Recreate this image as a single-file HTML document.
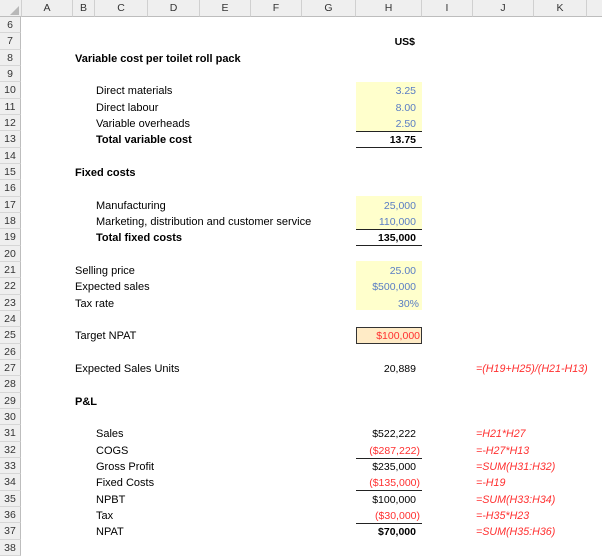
<!DOCTYPE html>
<html><head><meta charset="utf-8"><style>
*{margin:0;padding:0;box-sizing:border-box}
body{width:602px;height:549px;overflow:hidden;background:#fff;position:relative;font-family:"Liberation Sans",sans-serif;font-size:11px;color:#000}
.hdr{position:absolute;top:0;height:17px;background:#efefef;border-right:1px solid #d0d0d0;border-bottom:1px solid #bdbdbd;text-align:center;line-height:17px;color:#333;font-size:10.5px}
.rn{position:absolute;left:0;width:21px;height:16.33px;background:#efefef;border-bottom:1px solid #d6d6d6;border-right:1px solid #bdbdbd;text-align:center;line-height:16px;color:#333;font-size:10.5px}
.t{position:absolute;height:16.33px;line-height:18px;white-space:nowrap}
.r{text-align:right;font-size:10.5px;line-height:19px}
.b{font-weight:bold}
.blue{color:#5a7dc4}
.red{color:#ff3030}
.fr{font-style:italic;color:#ff3030;font-size:10.7px}
.fill{position:absolute;background:#ffffcc}
.ln{position:absolute;left:356px;width:66px;height:1px;background:#222}
</style></head><body>
<div class="hdr" style="left:0;width:22px"></div>
<div class="hdr" style="left:22px;width:51px">A</div>
<div class="hdr" style="left:73px;width:22px">B</div>
<div class="hdr" style="left:95px;width:53px">C</div>
<div class="hdr" style="left:148px;width:52px">D</div>
<div class="hdr" style="left:200px;width:51px">E</div>
<div class="hdr" style="left:251px;width:51px">F</div>
<div class="hdr" style="left:302px;width:54px">G</div>
<div class="hdr" style="left:356px;width:66px">H</div>
<div class="hdr" style="left:422px;width:51px">I</div>
<div class="hdr" style="left:473px;width:61px">J</div>
<div class="hdr" style="left:534px;width:53px">K</div>
<div class="hdr" style="left:587px;width:20px"></div>
<svg style="position:absolute;left:10px;top:6px" width="9" height="9"><polygon points="9,0 9,9 0,9" fill="#b8b8b8"/></svg>

<div class="fill" style="left:356px;top:82px;width:66px;height:49px"></div>
<div class="fill" style="left:356px;top:196px;width:66px;height:33px"></div>
<div class="fill" style="left:356px;top:261px;width:66px;height:49px"></div>
<div style="position:absolute;left:356px;top:327px;width:66px;height:17px;background:#ffebc6;border:1px solid #333"></div>

<div class="ln" style="top:131px"></div>
<div class="ln" style="top:147px"></div>
<div class="ln" style="top:229px"></div>
<div class="ln" style="top:245px"></div>
<div class="ln" style="top:458px"></div>
<div class="ln" style="top:490px"></div>
<div class="ln" style="top:523px"></div>

<div id="rows"></div>
<script>
var H=16.33,top0=17;
function y(n){return top0+(n-6)*H}
var h='';
for(var n=6;n<=38;n++){h+='<div class="rn" style="top:'+y(n)+'px">'+n+'</div>'}
var items=[
[7,'t b r',356,'US$',null,59],
[8,'t b',75,'Variable cost per toilet roll pack'],
[10,'t',96,'Direct materials'],[11,'t',96,'Direct labour'],[12,'t',96,'Variable overheads'],[13,'t b',96,'Total variable cost'],
[15,'t b',75,'Fixed costs'],
[17,'t',96,'Manufacturing'],[18,'t',96,'Marketing, distribution and customer service'],[19,'t b',96,'Total fixed costs'],
[21,'t',75,'Selling price'],[22,'t',75,'Expected sales'],[23,'t',75,'Tax rate'],
[25,'t',75,'Target NPAT'],[27,'t',75,'Expected Sales Units'],[29,'t b',75,'P&amp;L'],
[31,'t',96,'Sales'],[32,'t',96,'COGS'],[33,'t',96,'Gross Profit'],[34,'t',96,'Fixed Costs'],[35,'t',96,'NPBT'],[36,'t',96,'Tax'],[37,'t',96,'NPAT']
];
items.forEach(function(a){
 var w=a[5]?'width:'+a[5]+'px;':'';
 h+='<div class="'+a[1]+'" style="left:'+a[2]+'px;top:'+y(a[0])+'px;'+w+'">'+a[3]+'</div>';
});
var vals=[
[10,'blue','3.25'],[11,'blue','8.00'],[12,'blue','2.50'],[13,'b','13.75'],
[17,'blue','25,000'],[18,'blue','110,000'],[19,'b','135,000'],
[21,'blue','25.00'],[22,'blue','$500,000'],[23,'blue','30%',3],
[25,'red','$100,000',4],[27,'','20,889'],
[31,'','$522,222'],[32,'red','($287,222)',4],[33,'','$235,000'],[34,'red','($135,000)',4],[35,'','$100,000'],[36,'red','($30,000)',4],[37,'b','$70,000']
];
vals.forEach(function(a){
 var w=60+(a[3]||0);
 h+='<div class="t r '+a[1]+'" style="left:356px;width:'+w+'px;top:'+y(a[0])+'px">'+a[2]+'</div>';
});
var f=[[27,'=(H19+H25)/(H21-H13)'],[31,'=H21*H27'],[32,'=-H27*H13'],[33,'=SUM(H31:H32)'],[34,'=-H19'],[35,'=SUM(H33:H34)'],[36,'=-H35*H23'],[37,'=SUM(H35:H36)']];
f.forEach(function(a){h+='<div class="t fr" style="left:476px;top:'+y(a[0])+'px">'+a[1]+'</div>'});
document.getElementById('rows').innerHTML=h;
</script>
</body></html>
